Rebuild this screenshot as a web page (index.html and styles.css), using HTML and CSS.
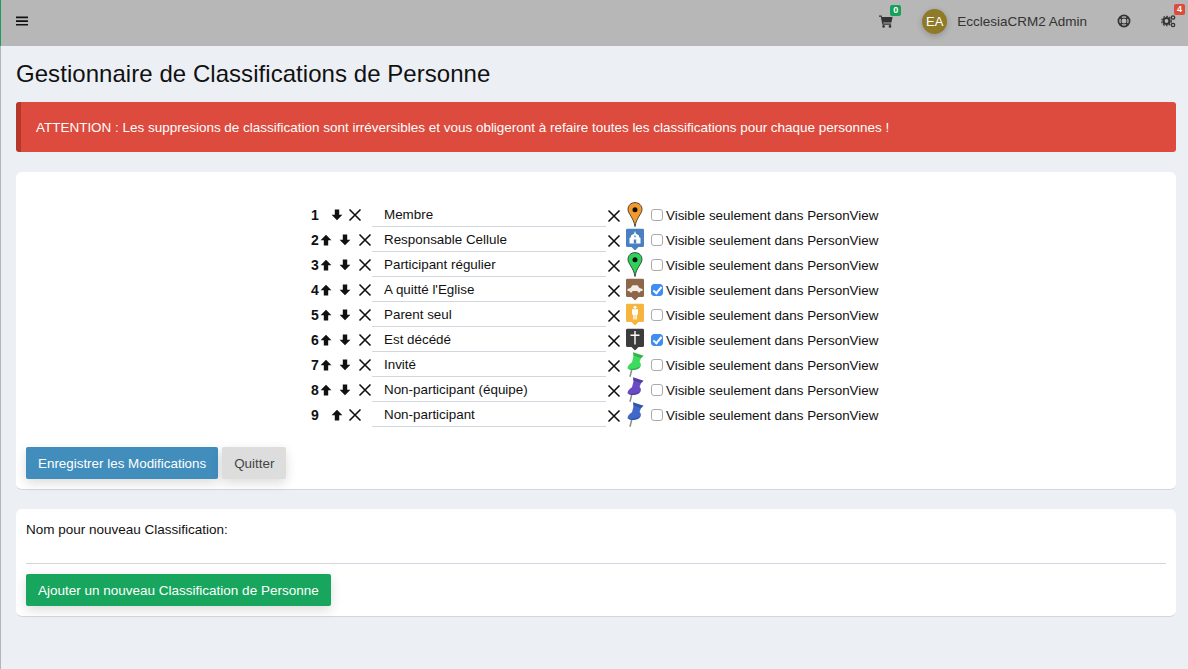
FILE: index.html
```html
<!DOCTYPE html>
<html lang="fr">
<head>
    <meta charset="UTF-8">
    <title>Gestionnaire de Classifications de Personne</title>
    <link rel="stylesheet" href="styles.css">
</head>
<body>
    <svg class="defs" width="0" height="0">
        <symbol id="ic-x" viewBox="0 0 14 14"><path d="M1.5 1.5 12.5 12.5M12.5 1.5 1.5 12.5" stroke="#111" stroke-width="1.6" fill="none"/></symbol>
        <symbol id="ic-up" viewBox="0 0 12 12"><path d="M6 .8 11.4 6.2H8.2V11.4H3.800V6.200H.6Z" fill="#111"/></symbol>
        <symbol id="ic-down" viewBox="0 0 12 12"><path d="M6 11.200 .6 5.800H3.800V.6H8.200V5.800H11.400Z" fill="#111"/></symbol>
        <symbol id="pin-drop" viewBox="0 0 16 25"><path d="M8 .6C3.800 .6 1 3.600 1 7.400c0 4.600 5.600 8 7 17.200C9.400 15.400 15 12 15 7.400 15 3.600 12.200 .6 8 .6Z" fill="currentColor" stroke="#3a3a3a" stroke-width=".9"/><circle cx="8" cy="7.800" r="2.500" fill="#111"/></symbol>
        <symbol id="pin-push" viewBox="0 0 18 25"><path d="M5.800 17.500 4 24.800" stroke="#8a8a8a" stroke-width="1.500" fill="none"/><path d="M7 .2 17.600 3.800 15 6.200 13.600 9.800C15.400 11.600 15.400 14.500 13.400 16 10.500 18.300 4.500 18.800 2 16.800 .6 15.400 2.800 12.400 6 10.300L7.400 4.800Z" fill="currentColor"/><path d="M7 .2 17.600 3.800 15 6.200 7.600 3.400ZM2 16.800C4.500 18.800 10.500 18.300 13.400 16 14 15.500 14.500 14.800 14.600 14 11 16.400 5.600 17 2 16.800Z" fill="#000" opacity=".18"/></symbol>
        <symbol id="marker" viewBox="0 0 18 22"><path d="M1.500 0H16.500A1.500 1.500 0 0 1 18 1.500V17A1.500 1.500 0 0 1 16.500 18.500H12.500L9 22 5.500 18.500H1.500A1.500 1.500 0 0 1 0 17V1.500A1.500 1.500 0 0 1 1.500 0Z" fill="currentColor"/></symbol>
    </svg>

    <header class="topbar">
        <svg class="burger" width="12" height="12" viewBox="0 0 12 12"><path d="M0 1.500H12V3.200H0ZM0 5.200H12V6.900H0ZM0 8.900H12V10.600H0Z" fill="#111"/></svg>
        <div class="topbar-right">
            <div class="nav-item cart">
                <svg width="14" height="13" viewBox="0 0 14 13"><path d="M0 .6H2.600L3 2H13.600L12.400 7.400H4.200L4.400 8.600H12.200V9.800H3.400L1.800 1.800H0Z" fill="#333"/><circle cx="4.600" cy="11.400" r="1.300" fill="#333"/><circle cx="11" cy="11.400" r="1.300" fill="#333"/></svg>
                <span class="badge badge-green">0</span>
            </div>
            <div class="user">
                <span class="avatar">EA</span>
                <span class="user-name">EcclesiaCRM2 Admin</span>
            </div>
            <div class="nav-item help">
                <svg width="14" height="14" viewBox="0 0 14 14"><circle cx="7" cy="7" r="5.600" fill="none" stroke="#333" stroke-width="1.700"/><circle cx="7" cy="7" r="3" fill="none" stroke="#333" stroke-width="1"/><path d="M3.200 3.200 5 5M10.800 3.200 9 5M3.200 10.800 5 9M10.800 10.800 9 9" stroke="#333" stroke-width="2"/></svg>
            </div>
            <div class="nav-item gears">
                <svg width="15" height="14" viewBox="0 0 15 14"><circle cx="5.500" cy="7" r="3" fill="none" stroke="#333" stroke-width="2.200"/><circle cx="5.500" cy="7" r="4.800" fill="none" stroke="#333" stroke-width="1.100" stroke-dasharray="1.800 1.300"/><circle cx="12" cy="3.500" r="1.700" fill="none" stroke="#333" stroke-width="1.300"/><circle cx="12" cy="11" r="1.700" fill="none" stroke="#333" stroke-width="1.300"/></svg>
                <span class="badge badge-red">4</span>
            </div>
        </div>
    </header>

    <main class="content">
        <h1 class="page-title">Gestionnaire de Classifications de Personne</h1>

        <div class="alert">ATTENTION : Les suppresions de classification sont irréversibles et vous obligeront à refaire toutes les classifications pour chaque personnes !</div>

        <section class="box box-list">
            <div class="class-table">
                <div class="class-row">
                    <div class="moves first"><b>1</b><svg class="arrow"><use href="#ic-down"/></svg><svg class="cross"><use href="#ic-x"/></svg></div>
                    <div class="name">Membre</div>
                    <svg class="cross"><use href="#ic-x"/></svg>
                    <svg class="pin pin-orange" viewBox="0 0 16 25"><use href="#pin-drop"/></svg>
                    <label class="vis"><span class="check"></span>Visible seulement dans PersonView</label>
                </div>
                <div class="class-row">
                    <div class="moves"><b>2</b><svg class="arrow"><use href="#ic-up"/></svg><svg class="arrow"><use href="#ic-down"/></svg><svg class="cross"><use href="#ic-x"/></svg></div>
                    <div class="name">Responsable Cellule</div>
                    <svg class="cross"><use href="#ic-x"/></svg>
                    <svg class="pin marker-blue" viewBox="0 -1 18 24"><use href="#marker" width="18" height="22"/><path d="M9 2.500 10 5.200 13 7V8.500L14.500 9.500V15H3.500V9.500L5 8.500V7L8 5.200Z" fill="#fff"/><path d="M7.800 11H10.200V15H7.800ZM8.300 7H9.700V8.800H8.300Z" fill="#4a7fc1"/></svg>
                    <label class="vis"><span class="check"></span>Visible seulement dans PersonView</label>
                </div>
                <div class="class-row">
                    <div class="moves"><b>3</b><svg class="arrow"><use href="#ic-up"/></svg><svg class="arrow"><use href="#ic-down"/></svg><svg class="cross"><use href="#ic-x"/></svg></div>
                    <div class="name">Participant régulier</div>
                    <svg class="cross"><use href="#ic-x"/></svg>
                    <svg class="pin pin-green" viewBox="0 0 16 25"><use href="#pin-drop"/></svg>
                    <label class="vis"><span class="check"></span>Visible seulement dans PersonView</label>
                </div>
                <div class="class-row">
                    <div class="moves"><b>4</b><svg class="arrow"><use href="#ic-up"/></svg><svg class="arrow"><use href="#ic-down"/></svg><svg class="cross"><use href="#ic-x"/></svg></div>
                    <div class="name">A quitté l'Eglise</div>
                    <svg class="cross"><use href="#ic-x"/></svg>
                    <svg class="pin marker-brown" viewBox="0 -1 18 24"><use href="#marker" width="18" height="22"/><path d="M1.500 10.500 4.500 9.500 6.500 6.800H11.500L13.500 9.500 16.500 10.500V12.500H14.500A1.500 1.500 0 0 1 11.500 12.500H6.500A1.500 1.500 0 0 1 3.500 12.500H1.500Z" fill="#f3ebe4"/></svg>
                    <label class="vis"><span class="check checked"></span>Visible seulement dans PersonView</label>
                </div>
                <div class="class-row">
                    <div class="moves"><b>5</b><svg class="arrow"><use href="#ic-up"/></svg><svg class="arrow"><use href="#ic-down"/></svg><svg class="cross"><use href="#ic-x"/></svg></div>
                    <div class="name">Parent seul</div>
                    <svg class="cross"><use href="#ic-x"/></svg>
                    <svg class="pin marker-yellow" viewBox="0 -1 18 24"><use href="#marker" width="18" height="22"/><circle cx="9" cy="3.800" r="1.500" fill="#fff"/><path d="M6 5.800H12V11H10.800V16H9.400V11.500H8.600V16H7.200V11H6Z" fill="#fff"/></svg>
                    <label class="vis"><span class="check"></span>Visible seulement dans PersonView</label>
                </div>
                <div class="class-row">
                    <div class="moves"><b>6</b><svg class="arrow"><use href="#ic-up"/></svg><svg class="arrow"><use href="#ic-down"/></svg><svg class="cross"><use href="#ic-x"/></svg></div>
                    <div class="name">Est décédé</div>
                    <svg class="cross"><use href="#ic-x"/></svg>
                    <svg class="pin marker-dark" viewBox="0 -1 18 24"><use href="#marker" width="18" height="22"/><path d="M8.300 2.500H9.700V6H13.500V7.400H9.700V16H8.300V7.400H4.500V6H8.300Z" fill="#fff"/></svg>
                    <label class="vis"><span class="check checked"></span>Visible seulement dans PersonView</label>
                </div>
                <div class="class-row">
                    <div class="moves"><b>7</b><svg class="arrow"><use href="#ic-up"/></svg><svg class="arrow"><use href="#ic-down"/></svg><svg class="cross"><use href="#ic-x"/></svg></div>
                    <div class="name">Invité</div>
                    <svg class="cross"><use href="#ic-x"/></svg>
                    <svg class="pin pin-lime" viewBox="0 0 18 25"><use href="#pin-push"/></svg>
                    <label class="vis"><span class="check"></span>Visible seulement dans PersonView</label>
                </div>
                <div class="class-row">
                    <div class="moves"><b>8</b><svg class="arrow"><use href="#ic-up"/></svg><svg class="arrow"><use href="#ic-down"/></svg><svg class="cross"><use href="#ic-x"/></svg></div>
                    <div class="name">Non-participant (équipe)</div>
                    <svg class="cross"><use href="#ic-x"/></svg>
                    <svg class="pin pin-purple" viewBox="0 0 18 25"><use href="#pin-push"/></svg>
                    <label class="vis"><span class="check"></span>Visible seulement dans PersonView</label>
                </div>
                <div class="class-row">
                    <div class="moves first"><b>9</b><svg class="arrow"><use href="#ic-up"/></svg><svg class="cross"><use href="#ic-x"/></svg></div>
                    <div class="name">Non-participant</div>
                    <svg class="cross"><use href="#ic-x"/></svg>
                    <svg class="pin pin-blue" viewBox="0 0 18 25"><use href="#pin-push"/></svg>
                    <label class="vis"><span class="check"></span>Visible seulement dans PersonView</label>
                </div>
            </div>
            <div class="actions">
                <button class="btn btn-blue">Enregistrer les Modifications</button>
                <button class="btn btn-grey">Quitter</button>
            </div>
        </section>

        <section class="box box-new">
            <div class="new-label">Nom pour nouveau Classification:</div>
            <div class="new-input"></div>
            <button class="btn btn-green">Ajouter un nouveau Classification de Personne</button>
        </section>
    </main>
</body>
</html>
```

FILE: styles.css
```css
* {
    margin: 0;
    padding: 0;
    box-sizing: border-box;
}

body {
    height: 669px;
    overflow: hidden;
    background: #ecf0f5;
    font-family: "Liberation Sans", Arial, sans-serif;
    font-size: 13.4px;
    color: #111;
}

.defs {
    position: absolute;
}

/* top bar */
.topbar {
    height: 46px;
    background: #b7b7b7;
    border-left: 1px solid #18a05a;
    display: flex;
    align-items: center;
    justify-content: space-between;
    padding: 0 13px 4px 15px;
}

.burger {
    display: block;
}

.topbar-right {
    display: flex;
    align-items: center;
}

.nav-item {
    position: relative;
    display: flex;
}

.cart {
    margin-right: 29px;
}

.help {
    margin-left: 30px;
    margin-right: 30px;
}

.gears {
    margin-right: -1px;
}

.badge {
    position: absolute;
    top: -10px;
    right: -8px;
    width: 11px;
    height: 11px;
    border-radius: 2px;
    color: #fff;
    font-size: 9px;
    font-weight: bold;
    line-height: 11px;
    text-align: center;
}

.badge-green {
    background: #18a05a;
}

.badge-red {
    background: #dd4b39;
    right: -9px;
}

.user {
    display: flex;
    align-items: center;
    gap: 10px;
}

.avatar {
    width: 25px;
    height: 25px;
    border-radius: 50%;
    background: #8f7a27;
    color: #fff;
    font-size: 13px;
    line-height: 25px;
    text-align: center;
    box-shadow: 0 2px 6px rgba(0, 0, 0, 0.2);
}

.user-name {
    color: #333;
    font-size: 13.5px;
}

/* page */
.content {
    height: 623px;
    border-left: 1px solid #b5b5b8;
    padding: 0 12px 0 15px;
}

.page-title {
    font-size: 24px;
    font-weight: normal;
    letter-spacing: 0.05px;
    line-height: 26px;
    padding-top: 15px;
    color: #111;
}

.alert {
    margin-top: 15px;
    height: 50px;
    padding-left: 15px;
    font-size: 13.48px;
    line-height: 51px;
    background: #dc4b3d;
    border-left: 5px solid #b5382b;
    border-radius: 3px;
    color: #fff;
}

.box {
    background: #fff;
    border-radius: 6px;
    border-bottom: 1px solid #d2d6de;
    padding: 0 10px;
}

.box-list {
    margin-top: 20px;
    height: 318px;
    padding-top: 30px;
}

.class-table {
    display: flex;
    flex-direction: column;
    align-items: center;
}

.class-row {
    display: flex;
    align-items: center;
    height: 25px;
    width: 570px;
}

.moves {
    width: 61px;
    flex: none;
    display: flex;
    align-items: center;
    font-size: 14px;
}

.moves b {
    width: 9px;
}

.moves .arrow {
    width: 12px;
    height: 12px;
    margin-right: 7px;
}

.moves.first b {
    width: 20px;
}

.moves.first .arrow {
    margin-right: 5px;
}

.cross {
    width: 14px;
    height: 14px;
    flex: none;
}

.name {
    width: 234px;
    height: 25px;
    flex: none;
    padding-left: 12px;
    line-height: 25px;
    border-bottom: 1px solid #d2d6de;
    margin-right: 1px;
}

.name + .cross {
    margin-top: 3px;
}

.pin {
    width: 18px;
    height: 25px;
    margin-left: 5px;
    flex: none;
}

.pin-orange {
    color: #f39a2b;
}

.pin-green {
    color: #2fd15a;
}

.pin-lime {
    color: #3ddc5e;
}

.pin-purple {
    color: #6a4bc4;
}

.pin-blue {
    color: #3f68c8;
}

.marker-blue {
    color: #4a7fc1;
}

.marker-brown {
    color: #8d6748;
}

.marker-yellow {
    color: #f5b53f;
}

.marker-dark {
    color: #3c3c3c;
}

.vis {
    display: flex;
    align-items: center;
    margin-left: 7px;
    padding-top: 1px;
    white-space: nowrap;
}

.check {
    width: 12px;
    height: 12px;
    margin-right: 3px;
    background: #fff;
    border: 1px solid #aaa;
    border-radius: 3px;
}

.check.checked {
    background: #3f8ef0;
    border-color: #3f8ef0;
    position: relative;
}

.check.checked::after {
    content: "";
    position: absolute;
    left: 3px;
    top: 0;
    width: 3px;
    height: 7px;
    border: solid #fff;
    border-width: 0 2px 2px 0;
    transform: rotate(40deg);
}

.actions {
    display: flex;
    gap: 4px;
    margin-top: 20px;
}

.btn {
    height: 32px;
    padding: 0 12px;
    border: none;
    border-radius: 2px;
    font-family: inherit;
    font-size: 13.4px;
    box-shadow: 0 4px 12px rgba(0, 0, 0, 0.14);
}

.btn-blue {
    background: #418dbb;
    color: #fff;
}

.btn-grey {
    background: #ddd;
    color: #444;
}

.btn-green {
    background: #18a65e;
    color: #fff;
    font-size: 13.5px;
}

.box-new {
    margin-top: 19px;
    height: 108px;
    padding-top: 12px;
}

.new-label {
    font-size: 13.5px;
    line-height: 17px;
}

.new-input {
    height: 26px;
    border-bottom: 1px solid #d2d6de;
    margin-bottom: 10px;
}
```
